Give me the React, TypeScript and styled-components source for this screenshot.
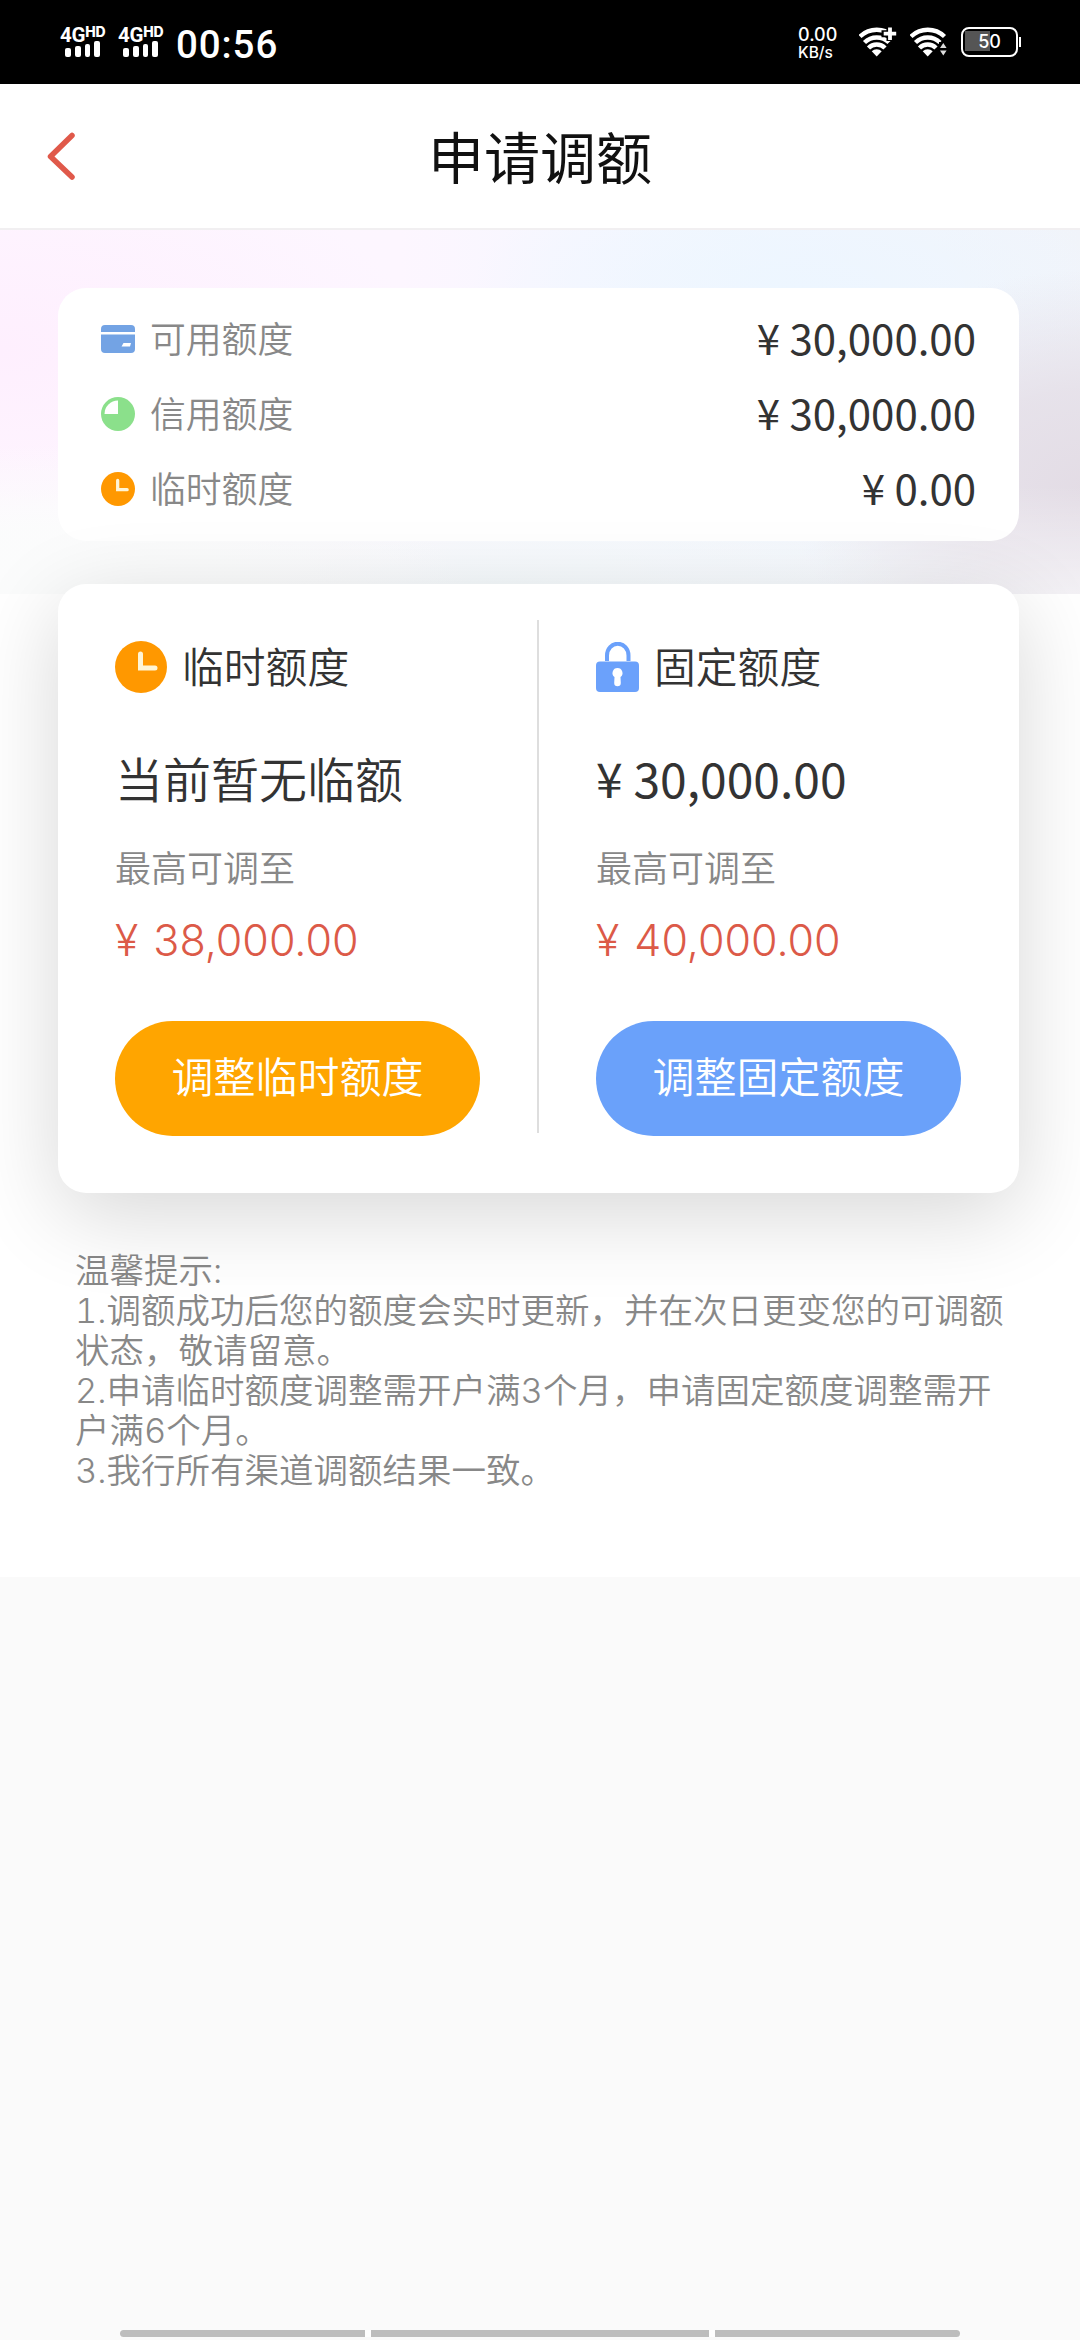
import React from "react";
import styled, { createGlobalStyle } from "styled-components";

const GlobalStyle = createGlobalStyle`
  * { box-sizing: border-box; }
  body {
    margin: 0;
    background: #fafafa;
    font-family: "Noto Sans CJK SC", sans-serif;
    font-weight: 350;
    color: #333;
  }
  svg { display: block; flex: none; }
`;

const Screen = styled.div`
  width: 1080px;
  height: 2340px;
  display: flex;
  flex-direction: column;
  overflow: hidden;
`;

const StatusBar = styled.header`
  height: 84px;
  flex: none;
  background: #000;
  color: #fff;
  display: flex;
  justify-content: space-between;
  padding: 0 59px 0 60px;
  font-family: Roboto, sans-serif;
`;

const StatusGroup = styled.div`
  display: flex;
  align-items: flex-start;
`;

const Signal = styled.div`
  width: 58px;
  padding-top: 26px;
`;

const Network = styled.div`
  display: flex;
  align-items: flex-start;
  height: 15px;
  font-size: 20.5px;
  line-height: 18px;
  font-weight: 700;
  letter-spacing: -0.2px;
  sup {
    font: 800 14px/12px Inter, sans-serif;
    letter-spacing: -0.3px;
  }
`;

const Bars = styled.div`
  display: flex;
  align-items: flex-end;
  gap: 4px;
  height: 16px;
  padding-left: 5px;
`;

const Bar = styled.i<{ $h: number }>`
  width: 5.8px;
  height: ${(p) => p.$h}px;
  border-radius: 2px;
  background: #fff;
`;

const Time = styled.div`
  font-size: 38.5px;
  line-height: 84px;
  padding-top: 3px;
  font-weight: 500;
  letter-spacing: 0.9px;
`;

const Speed = styled.div`
  padding-top: 26px;
  width: 61px;
  font-family: Inter, sans-serif;
  font-weight: 500;
  font-size: 18px;
  line-height: 18px;
  span {
    display: block;
    font-size: 15.5px;
    line-height: 17px;
  }
`;

const Battery = styled.div`
  width: 57px;
  height: 30px;
  margin: 27px 0 0 14px;
  border: 2.5px solid #fff;
  border-radius: 8px;
  background: linear-gradient(90deg, #555 25px, transparent 25px) 2px 2px / 48px 20px no-repeat;
  font: 500 18px/26px Inter, sans-serif;
  text-align: center;
`;

const BatteryTip = styled.i`
  width: 2px;
  height: 10px;
  margin: 37px 0 0 1px;
  background: #fff;
`;

const NavBar = styled.nav`
  height: 146px;
  flex: none;
  background: #fff;
  border-bottom: 2px solid #f1eff1;
  display: grid;
  grid-template-columns: 120px 1fr 120px;
  align-items: center;
`;

const BackButton = styled.button`
  border: 0;
  background: none;
  padding: 0 0 0 46px;
`;

const Title = styled.h1`
  margin: 0 0 2px;
  text-align: center;
  font-size: 56px;
  line-height: 80px;
  font-weight: 400;
  color: #111;
`;

const Body = styled.main`
  height: 1347px;
  flex: none;
  padding: 58px 61px 0 58px;
  background:
    radial-gradient(ellipse 420px 150px at 60px 364px, #fbfcfc 0%, rgba(251, 252, 252, 0.95) 45%, rgba(251, 252, 252, 0) 100%) 0 0 / 1080px 364px no-repeat,
    radial-gradient(ellipse 420px 120px at 500px 364px, #f5fafc 0%, rgba(245, 250, 252, 0) 100%) 0 0 / 1080px 364px no-repeat,
    linear-gradient(180deg, rgba(255, 255, 255, 0) 70%, rgba(255, 255, 255, 0.5) 100%) 0 0 / 1080px 364px no-repeat,
    radial-gradient(ellipse 300px 220px at 1090px 260px, #e3dce5 0%, rgba(227, 220, 229, 0.75) 45%, rgba(227, 220, 229, 0) 100%) 0 0 / 1080px 364px no-repeat,
    radial-gradient(ellipse 330px 130px at 800px 60px, #edf6ff 0%, rgba(237, 246, 255, 0) 100%) 0 0 / 1080px 364px no-repeat,
    radial-gradient(ellipse 420px 200px at 0px 120px, #feeffe 0%, rgba(254, 239, 254, 0) 100%) 0 0 / 1080px 364px no-repeat,
    linear-gradient(90deg, #fef6ff 0, #fdf6ff 400px, #f6f7ff 580px, #f1f6fe 780px, #f1f4fa 1080px) 0 0 / 1080px 364px no-repeat,
    #fff;
`;

const Summary = styled.section`
  height: 253px;
  border-radius: 28px;
  background: #fff;
  padding: 13px 43px 0;
`;

const SummaryRow = styled.div`
  height: 75px;
  display: flex;
  align-items: center;
`;

const SummaryLabel = styled.span`
  flex: 1;
  padding: 0 0 3px 15px;
  font-size: 35.8px;
  line-height: 52px;
  color: #888;
`;

const SummaryAmount = styled.span`
  font-size: 42px;
  line-height: 60px;
  padding-bottom: 3px;
  font-weight: 400;
`;

const Adjust = styled.section`
  position: relative;
  height: 609px;
  margin-top: 43px;
  border-radius: 28px;
  background: #fff;
  box-shadow: 0 21px 88px rgba(0, 0, 0, 0.16);
  display: grid;
  grid-template-columns: 481px 1fr;
  padding-top: 36px;
`;

const Column = styled.div<{ $divided?: boolean }>`
  height: 513px;
  padding: 18px 57px 0;
  border-right: ${(p) => (p.$divided ? "2px solid #dedede" : "0")};
`;

const ColumnHead = styled.h2<{ $gap: number }>`
  margin: 0;
  height: 58px;
  display: flex;
  align-items: center;
  gap: ${(p) => p.$gap}px;
  font-size: 41.8px;
  line-height: 58px;
  font-weight: 350;
  span { padding-bottom: 5px; }
`;

const Current = styled.div<{ $regular?: boolean }>`
  margin-top: 46px;
  height: 70px;
  font-size: 48px;
  line-height: 70px;
  white-space: nowrap;
  font-weight: ${(p) => (p.$regular ? 400 : 350)};
`;

const Hint = styled.div`
  margin-top: 28px;
  font-size: 36px;
  line-height: 52px;
  color: #888;
`;

const Limit = styled.div`
  margin-top: 18px;
  font-family: Inter, sans-serif;
  font-weight: 300;
  font-size: 43px;
  line-height: 60px;
  word-spacing: 3px;
  white-space: nowrap;
  color: #dc5a48;
`;

const Action = styled.button<{ $color: string }>`
  display: block;
  width: 365px;
  height: 115px;
  margin-top: 51px;
  padding: 0 0 7px;
  border: 0;
  border-radius: 58px;
  background: ${(p) => p.$color};
  color: #fff;
  font: 350 42px/60px "Noto Sans CJK SC", sans-serif;
`;

const Tips = styled.section`
  padding: 58px 0 0 17px;
  font-family: Inter, "Noto Sans CJK SC", sans-serif;
  font-size: 34.5px;
  line-height: 40px;
  font-weight: 350;
  font-variant-numeric: tabular-nums;
  color: #888;
`;

const TipLine = styled.div`
  height: 40px;
  white-space: nowrap;
`;

const HomeBar = styled.footer`
  margin: auto 120px 3px;
  height: 7px;
  display: grid;
  grid-template-columns: 245px 338px 245px;
  gap: 6px;
  background: #fff;
`;

const HomePart = styled.i<{ $radius?: string }>`
  background: #bdbdbd;
  border-radius: ${(p) => p.$radius ?? "0"};
`;

const CardIcon = () => (
  <svg width="34" height="28" viewBox="0 0 34 28">
    <path d="M4 0h26a4 4 0 0 1 4 4v3H0V4a4 4 0 0 1 4-4zM0 9.500h34V24a4 4 0 0 1-4 4H4a4 4 0 0 1-4-4z" fill="#73a3e4" />
    <path d="M22.500 18h7.500l-1 3.500h-8.500z" fill="#fff" />
  </svg>
);

const PieIcon = () => (
  <svg width="34" height="34" viewBox="0 0 34 34">
    <circle cx="17" cy="17" r="17" fill="#8be08b" />
    <path d="M17 3.500V17H3.500A13.500 13.500 0 0 1 17 3.500z" fill="#fff" />
  </svg>
);

const ClockIcon = ({ size }: { size: number }) => (
  <svg width={size} height={size} viewBox="0 0 52 52">
    <circle cx="26" cy="26" r="26" fill="#ff9800" />
    <path d="M25.500 13v14h14.500" fill="none" stroke="#fff5d6" strokeWidth="5" strokeLinecap="round" />
  </svg>
);

const LockIcon = () => (
  <svg width="43" height="50" viewBox="0 0 43 50">
    <path d="M11 19v-5.500a10.700 11.700 0 0 1 21.500 0V19" fill="none" stroke="#6ba1fb" strokeWidth="4" />
    <rect y="19.500" width="43" height="30.500" rx="4" fill="#6ba1fb" />
    <path d="M21.500 26a5 5 0 0 1 3 9l.3 6a3.300 3.300 0 0 1-6.600 0l.3-6a5 5 0 0 1 3-9z" fill="#fff" />
  </svg>
);

const BackIcon = () => (
  <svg width="30" height="50" viewBox="0 0 30 50">
    <path d="M26 4.500L4.500 25.500l21.500 20.500" fill="none" stroke="#e0594a" strokeWidth="5.500" strokeLinecap="round" strokeLinejoin="round" />
  </svg>
);

const WifiIcon = ({ variant }: { variant: "plus" | "transfer" }) => (
  <svg width={variant === "plus" ? 51 : 37} height="84" viewBox={variant === "plus" ? "0 0 51 84" : "0 0 37 84"}>
    <g transform="translate(-0.5 -1)">
      <g fill="none" stroke="#fff" strokeWidth="4.400">
        <path d="M1.500 37.500a24 24 0 0 1 33.500 0" />
        <path d="M6 43.500a17.500 17.500 0 0 1 24.500 0" />
        <path d="M10 49a11.500 11.500 0 0 1 16.500 0" />
      </g>
      <path d="M13.200 52.300a7 7 0 0 1 10 0L18.200 57.500z" fill="#fff" />
    </g>
    {variant === "plus" ? (
      <g>
        <path d="M31 26v15M22.500 33.700h15" stroke="#000" strokeWidth="7" />
        <path d="M31 27.500v12.500M24.700 33.700h12.500" stroke="#fff" strokeWidth="3.800" />
      </g>
    ) : (
      <g>
        <path d="M29 42h8v15h-8z" fill="#000" />
        <path d="M33.300 43l3.300 5h-6.600zM33.300 55.500l3.300-5h-6.600z" fill="#ddd" />
      </g>
    )}
  </svg>
);

const SignalMeter = () => (
  <Signal>
    <Network>
      4G<sup>HD</sup>
    </Network>
    <Bars>
      {[9, 11, 13.5, 16].map((h) => (
        <Bar key={h} $h={h} />
      ))}
    </Bars>
  </Signal>
);

const summary = [
  { icon: <CardIcon />, label: "可用额度", amount: "¥ 30,000.00" },
  { icon: <PieIcon />, label: "信用额度", amount: "¥ 30,000.00" },
  { icon: <ClockIcon size={34} />, label: "临时额度", amount: "¥ 0.00" },
];

const tips = [
  "温馨提示:",
  "1.调额成功后您的额度会实时更新，并在次日更变您的可调额",
  "状态，敬请留意。",
  "2.申请临时额度调整需开户满3个月，申请固定额度调整需开",
  "户满6个月。",
  "3.我行所有渠道调额结果一致。",
];

export default function App() {
  return (
    <Screen>
      <GlobalStyle />
      <StatusBar>
        <StatusGroup>
          <SignalMeter />
          <SignalMeter />
          <Time>00:56</Time>
        </StatusGroup>
        <StatusGroup>
          <Speed>
            0.00<span>KB/s</span>
          </Speed>
          <WifiIcon variant="plus" />
          <WifiIcon variant="transfer" />
          <Battery>50</Battery>
          <BatteryTip />
        </StatusGroup>
      </StatusBar>
      <NavBar>
        <BackButton>
          <BackIcon />
        </BackButton>
        <Title>申请调额</Title>
      </NavBar>
      <Body>
        <Summary>
          {summary.map((row) => (
            <SummaryRow key={row.label}>
              {row.icon}
              <SummaryLabel>{row.label}</SummaryLabel>
              <SummaryAmount>{row.amount}</SummaryAmount>
            </SummaryRow>
          ))}
        </Summary>
        <Adjust>
          <Column $divided>
            <ColumnHead $gap={15}>
              <ClockIcon size={52} />
              <span>临时额度</span>
            </ColumnHead>
            <Current>当前暂无临额</Current>
            <Hint>最高可调至</Hint>
            <Limit>¥ 38,000.00</Limit>
            <Action $color="#ffa500">调整临时额度</Action>
          </Column>
          <Column>
            <ColumnHead $gap={15}>
              <LockIcon />
              <span>固定额度</span>
            </ColumnHead>
            <Current $regular>¥ 30,000.00</Current>
            <Hint>最高可调至</Hint>
            <Limit>¥ 40,000.00</Limit>
            <Action $color="#6aa1fa">调整固定额度</Action>
          </Column>
        </Adjust>
        <Tips>
          {tips.map((line) => (
            <TipLine key={line}>{line}</TipLine>
          ))}
        </Tips>
      </Body>
      <HomeBar>
        <HomePart $radius="4px 0 0 4px" />
        <HomePart />
        <HomePart $radius="0 4px 4px 0" />
      </HomeBar>
    </Screen>
  );
}
